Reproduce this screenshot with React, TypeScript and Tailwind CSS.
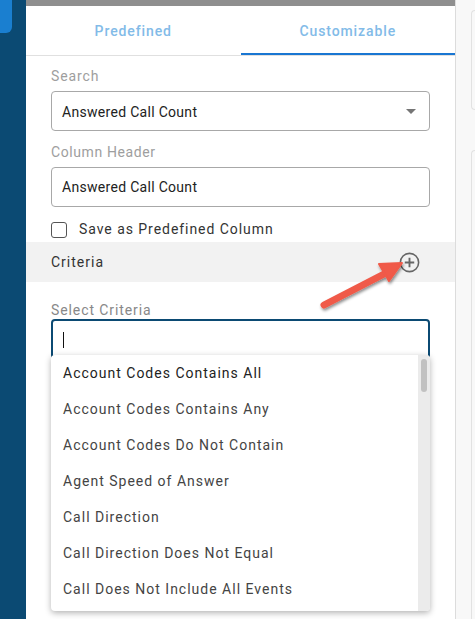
import { useState } from 'react';

const criteria = [
  'Account Codes Contains All',
  'Account Codes Contains Any',
  'Account Codes Do Not Contain',
  'Agent Speed of Answer',
  'Call Direction',
  'Call Direction Does Not Equal',
  'Call Does Not Include All Events',
];

function PlusCircle() {
  return (
    <svg width="21" height="21" viewBox="0 0 20 20" fill="none" stroke="#666" strokeWidth="1.5">
      <circle cx="10" cy="10" r="8.7" />
      <path d="M10 5.5v9M5.5 10h9" strokeWidth="1.8" />
    </svg>
  );
}

function Arrow() {
  return (
    <svg width="100" height="64" viewBox="0 0 100 64" className="absolute left-[286px] top-[252px]">
      <defs>
        <filter id="sh" x="-20%" y="-20%" width="150%" height="160%">
          <feDropShadow dx="1" dy="2" stdDeviation="1.5" floodColor="#000" floodOpacity="0.45" />
        </filter>
      </defs>
      <g filter="url(#sh)">
        <path d="M12 53 L74 21" stroke="#f05a48" strokeWidth="7" strokeLinecap="round" />
        <path d="M90 11 L67 12 L77 29 Z" fill="#f05a48" stroke="#f05a48" strokeWidth="2" strokeLinejoin="round" />
      </g>
    </svg>
  );
}

export default function App() {
  const [tab, setTab] = useState(1);
  const [saved, setSaved] = useState(false);

  return (
    <div className="w-[475px] h-[619px] flex overflow-hidden bg-[#f8f8f8] font-['Roboto',sans-serif]">
      {/* Side rail */}
      <div className="w-[26px] shrink-0 bg-[#0b4a73]">
        <div className="w-[12px] h-[33px] bg-[#1a7fd0] rounded-br-[6px]" />
      </div>

      {/* Column editor panel */}
      <div className="relative w-[430px] shrink-0 bg-white border-r border-[#dcdcdc] flex flex-col">
        <div className="h-[6px] bg-[#8f8f8f]" />
        <div className="flex h-[50px] border-b border-[#e0e0e0]">
          {['Predefined', 'Customizable'].map((t, i) => (
            <button
              key={t}
              onClick={() => setTab(i)}
              className={`flex-1 pt-[4px] text-[14px] font-medium tracking-[0.9px] text-[#82bbe8] ${
                tab === i ? 'border-b-2 border-[#1976d2]' : 'border-b-2 border-transparent'
              }`}
            >
              {t}
            </button>
          ))}
        </div>

        <div className="px-[25px]">
          <div className="mt-[12px] text-[14px] text-[#9e9e9e] tracking-[0.9px] leading-[16px]">Search</div>
          <div className="mt-[7px] h-[40px] rounded-[4px] border border-[#a8a8a8] flex items-center justify-between pl-[10px] pr-[13px]">
            <span className="text-[14px] text-[#222] tracking-[0.3px] mt-[2px]">Answered Call Count</span>
            <span className="w-0 h-0 border-l-[5px] border-r-[5px] border-t-[5px] border-l-transparent border-r-transparent border-t-[#757575] mt-[1px]" />
          </div>

          <div className="mt-[13px] text-[14px] text-[#9e9e9e] tracking-[0.6px] leading-[16px]">Column Header</div>
          <div className="mt-[7px] h-[40px] rounded-[4px] border border-[#a8a8a8] flex items-center pl-[10px]">
            <span className="text-[14px] text-[#222] tracking-[0.3px]">Answered Call Count</span>
          </div>

          <label className="mt-[12px] flex items-center gap-[12px] cursor-pointer">
            <span
              onClick={() => setSaved(!saved)}
              className={`w-[16px] h-[16px] rounded-[3px] border-[1.5px] border-[#555] ${saved ? 'bg-[#1976d2]' : ''}`}
            />
            <span className="text-[14px] text-[#333] tracking-[0.95px]">Save as Predefined Column</span>
          </label>
        </div>

        <div className="mt-[2px] h-[40px] bg-[#f2f2f2] flex items-center justify-between pl-[25px] pr-[35px]">
          <span className="text-[14px] text-[#333] tracking-[1px]">Criteria</span>
          <PlusCircle />
        </div>

        <div className="px-[25px]">
          <div className="mt-[20px] text-[14px] text-[#888] tracking-[0.9px] leading-[16px]">Select Criteria</div>
          <div className="relative mt-[1px] h-[40px] rounded-[4px] border-2 border-[#0b4a73] flex items-center pl-[10px]">
            <span className="w-[1px] h-[16px] bg-[#111] mt-[2px]" />
          </div>

          {/* Criteria dropdown */}
          <div className="relative z-10 -mt-[4px] h-[256px] rounded-[4px] bg-white shadow-[0_2px_6px_rgba(0,0,0,0.3)] flex overflow-hidden">
            <ul className="flex-1">
              {criteria.map((c, i) => (
                <li
                  key={c}
                  className={`h-[36px] flex items-center pl-[12px] text-[14px] tracking-[1px] ${
                    i === 0 ? 'text-[#222]' : 'text-[#444]'
                  }`}
                >
                  {c}
                </li>
              ))}
            </ul>
            <div className="w-[12px] bg-[#ebebeb] flex justify-center pt-[4px]">
              <div className="w-[6px] h-[33px] rounded-full bg-[#c1c1c1]" />
            </div>
          </div>
        </div>

        <Arrow />
      </div>

      {/* Neighbouring panel edge */}
      <div className="flex-1 pt-[10px] pl-[15px]">
        <div className="h-[100px] rounded-l-[6px] border-l border-t border-b border-[#e2e2e2]" />
        <div className="mt-[40px] h-[480px] border-l border-[#e2e2e2] rounded-tl-[6px] border-t" />
      </div>
    </div>
  );
}
